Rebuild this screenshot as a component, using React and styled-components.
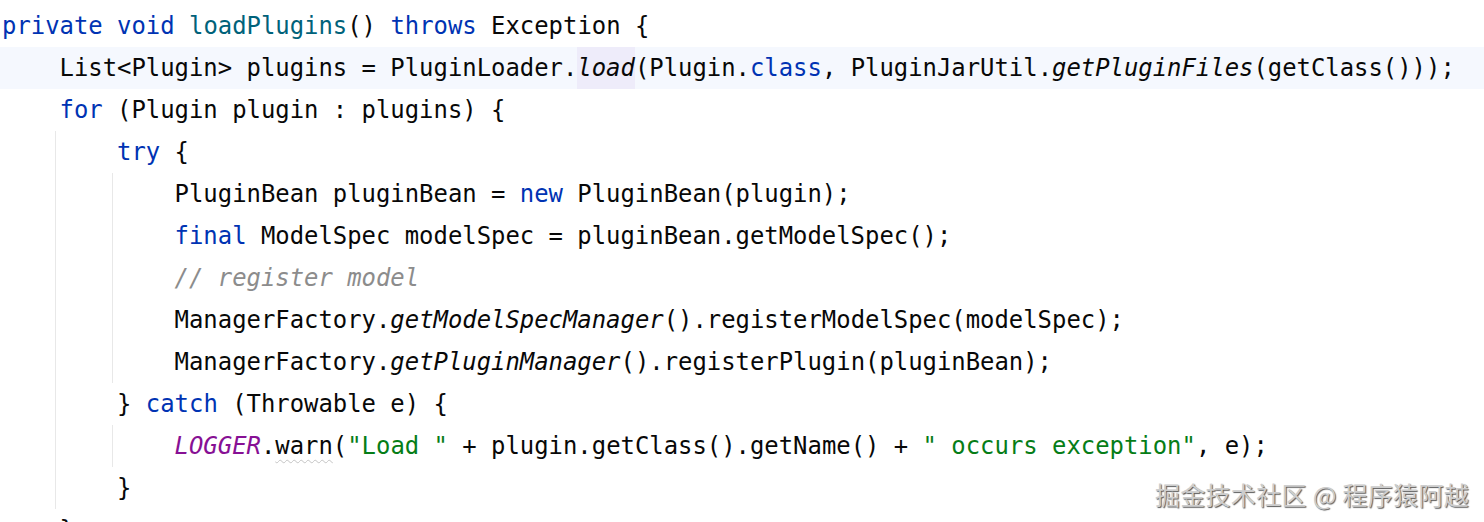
import React from 'react';
import styled, { createGlobalStyle } from 'styled-components';

const GlobalStyle = createGlobalStyle`
  html, body {
    margin: 0;
    padding: 0;
    background: #ffffff;
    overflow: hidden;
  }
`;

const Editor = styled.div`
  position: relative;
  width: 1484px;
  height: 522px;
  overflow: hidden;
  box-sizing: border-box;
  padding-top: 5px;
  background: #ffffff;
  font-family: "DejaVu Sans Mono", "Liberation Mono", monospace;
  font-size: 23.9px;
  color: #080808;
`;

const Line = styled.div`
  display: flex;
  height: 42px;
  line-height: 42px;
  padding-left: 2px;
  white-space: pre;
  background: ${props => props.current ? '#F5F8FE' : 'transparent'};
`;

const Indent = styled.span`
  flex: none;
  width: 4ch;
  height: 100%;
  background: ${props => props.guide
    ? 'linear-gradient(#e8e8e8, #e8e8e8) no-repeat calc(100% - 4px) 0 / 1px 100%'
    : 'none'};
`;

const Code = styled.span`
  display: flex;
  height: 100%;
`;

const colors = {
  kw: '#0033B3',
  decl: '#00627A',
  str: '#067D17',
  comment: '#8C8C8C',
  field: '#871094',
};

const Tok = styled.span`
  display: inline-block;
  height: 100%;
  color: ${props => colors[props.kind] || 'inherit'};
  font-style: ${props => props.italic ? 'italic' : 'normal'};
  background: ${props => props.mark ? '#EEECFA' : 'transparent'};
  text-decoration: ${props => props.wavy ? 'underline wavy #c4c4c4' : 'none'};
  text-decoration-thickness: 1px;
  text-underline-offset: 5px;
`;

const Watermark = styled.div`
  position: absolute;
  right: 15px;
  bottom: 15px;
  font-family: "Noto Sans CJK SC", "Noto Sans", sans-serif;
  font-size: 25px;
  line-height: 1;
  letter-spacing: 0.3px;
  color: #cdcdcd;
  text-shadow: 1px 1px 1px #5a5a5a, -0.5px -0.5px 0 #ffffff;
`;

const t = (text, props = {}) => ({ text, ...props });
const kw = text => t(text, { kind: 'kw' });
const it = text => t(text, { italic: true });

const lines = [
  { guides: [], tokens: [kw('private'), t(' '), kw('void'), t(' '), t('loadPlugins', { kind: 'decl' }), t('() '), kw('throws'), t(' Exception {')] },
  {
    guides: [false], current: true,
    tokens: [
      t('List<Plugin> plugins = PluginLoader.'), t('load', { italic: true, mark: true }),
      t('(Plugin.'), kw('class'), t(', PluginJarUtil.'), it('getPluginFiles'), t('(getClass()));'),
    ],
  },
  { guides: [false], tokens: [kw('for'), t(' (Plugin plugin : plugins) {')] },
  { guides: [true, false], tokens: [kw('try'), t(' {')] },
  { guides: [true, true, false], tokens: [t('PluginBean pluginBean = '), kw('new'), t(' PluginBean(plugin);')] },
  { guides: [true, true, false], tokens: [kw('final'), t(' ModelSpec modelSpec = pluginBean.getModelSpec();')] },
  { guides: [true, true, false], tokens: [t('// register model', { kind: 'comment', italic: true })] },
  { guides: [true, true, false], tokens: [t('ManagerFactory.'), it('getModelSpecManager'), t('().registerModelSpec(modelSpec);')] },
  { guides: [true, true, false], tokens: [t('ManagerFactory.'), it('getPluginManager'), t('().registerPlugin(pluginBean);')] },
  { guides: [true, false], tokens: [t('} '), kw('catch'), t(' (Throwable e) {')] },
  {
    guides: [true, true, false],
    tokens: [
      t('LOGGER', { kind: 'field', italic: true }), t('.'), t('warn', { wavy: true }), t('('),
      t('"Load "', { kind: 'str' }), t(' + plugin.getClass().getName() + '),
      t('" occurs exception"', { kind: 'str' }), t(', e);'),
    ],
  },
  { guides: [true, false], tokens: [t('}')] },
  { guides: [false], tokens: [t('}')] },
];

const App = () => (
  <Editor>
    <GlobalStyle />
    {lines.map((line, i) => (
      <Line key={i} current={line.current}>
        {line.guides.map((g, j) => <Indent key={j} guide={g} />)}
        <Code>
          {line.tokens.map((tok, j) => (
            <Tok key={j} kind={tok.kind} italic={tok.italic} mark={tok.mark} wavy={tok.wavy}>
              {tok.text}
            </Tok>
          ))}
        </Code>
      </Line>
    ))}
    <Watermark>掘金技术社区 @ 程序猿阿越</Watermark>
  </Editor>
);

export default App;
